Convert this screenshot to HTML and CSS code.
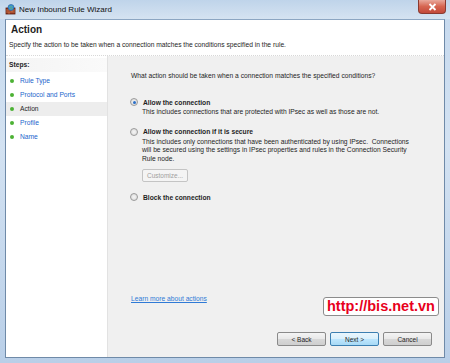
FILE: index.html
```html
<!DOCTYPE html>
<html lang="en">
<head>
    <meta charset="UTF-8">
    <title>New Inbound Rule Wizard</title>
    <link rel="stylesheet" href="styles.css">
</head>
<body>
    <div class="window">
        <!-- Title bar -->
        <div class="titlebar">
            <svg class="app-icon" width="11" height="11" viewBox="0 0 11 11">
                <rect x="1" y="4" width="9" height="6" fill="#9c3b22" stroke="#5a1e10" stroke-width="0.8"/>
                <path d="M1 6h9M1 8h9M4 4v2M7 6v2M4 8v2" stroke="#d98a5a" stroke-width="0.6"/>
                <circle cx="6" cy="3.5" r="3" fill="#3d8fd8" stroke="#1c5a99" stroke-width="0.6"/>
                <path d="M4 2.5c1 .8 2.5.5 3.5-.5M5 5.5c.6-1 1.6-1.2 2.6-.8" stroke="#6cc04a" stroke-width="0.8" fill="none"/>
            </svg>
            <span class="title">New Inbound Rule Wizard</span>
            <div class="close-btn">
                <svg width="9" height="8" viewBox="0 0 9 8">
                    <path d="M1.5 1l6 6M7.5 1l-6 6" stroke="#fff" stroke-width="1.8"/>
                </svg>
            </div>
        </div>

        <div class="client">
            <!-- Page heading -->
            <div class="header">
                <h1>Action</h1>
                <p>Specify the action to be taken when a connection matches the conditions specified in the rule.</p>
            </div>

            <div class="body">
                <!-- Wizard steps -->
                <div class="steps">
                    <div class="steps-label">Steps:</div>
                    <ul>
                        <li><span class="dot"></span>Rule Type</li>
                        <li><span class="dot"></span>Protocol and Ports</li>
                        <li class="current"><span class="dot"></span>Action</li>
                        <li><span class="dot"></span>Profile</li>
                        <li><span class="dot"></span>Name</li>
                    </ul>
                </div>

                <!-- Page content -->
                <div class="content">
                    <p class="question">What action should be taken when a connection matches the specified conditions?</p>

                    <div class="option">
                        <div class="option-row"><span class="radio checked"></span><b>Allow the connection</b></div>
                        <p class="desc">This includes connections that are protected with IPsec as well as those are not.</p>
                    </div>

                    <div class="option">
                        <div class="option-row"><span class="radio"></span><b>Allow the connection if it is secure</b></div>
                        <p class="desc">This includes only connections that have been authenticated by using IPsec.&nbsp; Connections will be secured using the settings in IPsec properties and rules in the Connection Security Rule node.</p>
                        <button type="button" class="customize" disabled>Customize...</button>
                    </div>

                    <div class="option">
                        <div class="option-row"><span class="radio"></span><b>Block the connection</b></div>
                    </div>

                    <div class="spacer"></div>

                    <a class="learn" href="#">Learn more about actions</a>

                    <div class="buttons">
                        <button type="button" class="btn">&lt; Back</button>
                        <button type="button" class="btn default">Next &gt;</button>
                        <button type="button" class="btn">Cancel</button>
                    </div>

                    <div class="watermark">http://bis.net.vn</div>
                </div>
            </div>
        </div>
    </div>
</body>
</html>
```

FILE: styles.css
```css
/* Whole window with the Aero frame */
html, body {
    margin: 0;
    padding: 0;
}
body {
    font-family: 'Liberation Sans', Arial, sans-serif;
    font-size: 6.7px;
    color: #1e1e1e;
    background: #8fb0d3;
}
.window {
    width: 450px;
    height: 363px;
    display: flex;
    flex-direction: column;
    background: linear-gradient(180deg, #c6d9ee 0%, #d3e2f2 40%, #b9cfe8 100%);
    overflow: hidden;
}
/* Title bar */
.titlebar {
    height: 19px;
    flex: none;
    display: flex;
    align-items: center;
    padding-left: 5px;
    position: relative;
    background: linear-gradient(180deg, #bfd4ea, #d5e3f1);
}
.app-icon {
    margin-right: 3px;
    margin-top: -1px;
}
.title {
    font-size: 8px;
    color: #111;
    margin-top: -1px;
}
.close-btn {
    position: absolute;
    top: 0;
    left: 418px;
    width: 28px;
    height: 14px;
    border: 1px solid #8a3a30;
    border-top: none;
    border-radius: 0 0 4px 4px;
    box-sizing: border-box;
    background: linear-gradient(180deg, #e9a99c 0%, #d66550 50%, #c2493a 100%);
    display: flex;
    align-items: center;
    justify-content: center;
}
/* Client area */
.client {
    flex: 1;
    margin: 0 5px 5px 5px;
    border: 1px solid #6f8aa8;
    border-top-color: #8ca6c2;
    display: flex;
    flex-direction: column;
    background: #f0f0f0;
    min-height: 0;
}
.header {
    height: 36px;
    flex: none;
    background: #fff;
    padding: 3px 0 0 3px;
    box-sizing: border-box;
    border-bottom: 1px dotted #d8d8d8;
}
.header h1 {
    margin: 0 0 0 2px;
    font-size: 10px;
    font-weight: bold;
    line-height: 13px;
}
.header p {
    margin: 4px 0 0 0;
    line-height: 9px;
}
.body {
    flex: 1;
    display: flex;
    min-height: 0;
}
/* Steps list on the left */
.steps {
    width: 101px;
    flex: none;
    background: #fff;
    border-right: 1px solid #e2e2e2;
    padding-top: 2px;
}
.steps-label {
    font-weight: bold;
    line-height: 14px;
    padding-left: 3px;
    background: linear-gradient(90deg, #f4f4f4, #fafafa);
    margin-bottom: 2px;
}
.steps ul {
    list-style: none;
    margin: 0;
    padding: 0;
}
.steps li {
    height: 14px;
    line-height: 14px;
    padding-left: 4px;
    color: #2266cc;
    display: flex;
    align-items: center;
}
.steps li.current {
    color: #1e1e1e;
    background: #ededed;
}
.dot {
    width: 4px;
    height: 4px;
    border-radius: 50%;
    background: #4cb134;
    margin-right: 6px;
}
/* Content on the right */
.content {
    flex: 1;
    display: flex;
    flex-direction: column;
    padding: 15px 12px 11px 22px;
    position: relative;
}
.question {
    margin: 0 0 17px 1px;
    line-height: 9px;
}
.option {
    margin-bottom: 10px;
}
.option-row {
    display: flex;
    align-items: center;
    height: 10px;
}
.radio {
    width: 6px;
    height: 6px;
    border: 1px solid #9a9a9a;
    border-radius: 50%;
    background: radial-gradient(circle, #f6f6f6, #d6d6d6);
    margin-right: 5px;
    position: relative;
}
.radio.checked::after {
    content: "";
    position: absolute;
    left: 1.5px;
    top: 1.5px;
    width: 3px;
    height: 3px;
    border-radius: 50%;
    background: #2a6fc8;
}
.desc {
    margin: 1px 0 0 12px;
    line-height: 8.5px;
    width: 268px;
}
.customize {
    margin: 6px 0 0 12px;
    width: 46px;
    height: 13px;
    padding: 0;
    font-family: inherit;
    font-size: 6.5px;
    color: #a0a0a0;
    border: 1px solid #c4c4c4;
    border-radius: 2px;
    background: #f4f4f4;
}
.spacer {
    flex: 1;
}
.learn {
    color: #2f7ad6;
    margin-left: 1px;
    margin-bottom: 30px;
}
.buttons {
    display: flex;
    justify-content: flex-end;
    gap: 4px;
}
.btn {
    width: 49px;
    height: 14px;
    padding: 0;
    font-family: inherit;
    font-size: 6.5px;
    color: #1e1e1e;
    border: 1px solid #8a8a8a;
    border-radius: 2px;
    background: linear-gradient(180deg, #f4f4f4 0%, #e8e8e8 50%, #d8d8d8 51%, #cfcfcf 100%);
}
.btn.default {
    border-color: #3c7fb1;
    background: linear-gradient(180deg, #eaf6fd 0%, #d9f0fc 50%, #bee6fd 51%, #a7d9f5 100%);
}
/* Site watermark over the page */
.watermark {
    position: absolute;
    left: 215px;
    top: 241px;
    padding: 0 3px;
    height: 17px;
    line-height: 17px;
    background: #fff;
    border: 1px solid #8c8c8c;
    border-radius: 3px;
    color: #e8001c;
    font-size: 14.5px;
    font-weight: bold;
}
```
